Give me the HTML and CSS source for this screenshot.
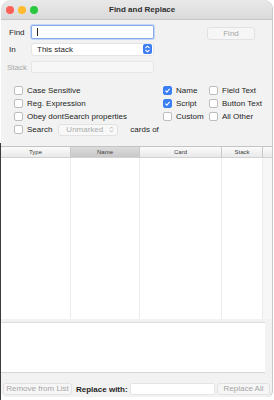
FILE: index.html
```html
<!DOCTYPE HTML>
<html>
	<head>
		<meta charset="utf-8">
		<title>Find and Replace</title>
		<link rel="stylesheet" href="styles.css">
	</head>
	<body>
		<div class="window">
			<div class="titlebar">
				<div class="lights">
					<span class="light red"></span>
					<span class="light yellow"></span>
					<span class="light green"></span>
				</div>
				<div class="title">Find and Replace</div>
			</div>

			<div class="top">
				<div class="row row-find">
					<span class="lbl">Find</span>
					<div class="field focus"><span class="caret"></span></div>
					<div class="btn btn-find">Find</div>
				</div>
				<div class="row row-in">
					<span class="lbl">In</span>
					<div class="popup">
						<span>This stack</span>
						<span class="stepper">
							<svg width="7" height="8" viewBox="0 0 7 8"><path d="M1.5 3 3.5 1.2 5.5 3M1.5 5 3.5 6.8 5.5 5" fill="none" stroke="#fff" stroke-width="1.1"/></svg>
						</span>
					</div>
				</div>
				<div class="row row-stack">
					<span class="lbl dim">Stack</span>
					<div class="field disabled"></div>
				</div>
			</div>

			<div class="options">
				<div class="col col1">
					<label class="chk"><span class="box"></span>Case Sensitive</label>
					<label class="chk"><span class="box"></span>Reg. Expression</label>
					<label class="chk"><span class="box"></span>Obey dontSearch properties</label>
					<label class="chk search"><span class="box"></span>Search
						<span class="mini-popup">Unmarked
							<svg width="5" height="7" viewBox="0 0 5 7"><path d="M1 2.6 2.5 1 4 2.6M1 4.4 2.5 6 4 4.4" fill="none" stroke="#aaa" stroke-width="0.8"/></svg>
						</span>
						<span class="cut">cards of</span>
					</label>
				</div>
				<div class="col col2">
					<label class="chk"><span class="box on"></span>Name</label>
					<label class="chk"><span class="box on"></span>Script</label>
					<label class="chk"><span class="box"></span>Custom</label>
				</div>
				<div class="col col3">
					<label class="chk"><span class="box"></span>Field Text</label>
					<label class="chk"><span class="box"></span>Button Text</label>
					<label class="chk"><span class="box"></span>All Other</label>
				</div>
			</div>

			<div class="table">
				<div class="thead">
					<div class="th c-type">Type</div>
					<div class="th c-name sorted">Name</div>
					<div class="th c-card">Card</div>
					<div class="th c-stack">Stack</div>
					<div class="th c-fill"></div>
				</div>
				<div class="tbody">
					<div class="td c-type"></div>
					<div class="td c-name"></div>
					<div class="td c-card"></div>
					<div class="td c-stack"></div>
					<div class="td c-fill"></div>
				</div>
			</div>

			<div class="notes"></div>

			<div class="bottombar">
				<div class="btn btn-remove">Remove from List</div>
				<span class="lbl-bold">Replace with:</span>
				<div class="field replace"></div>
				<div class="btn btn-replace">Replace All</div>
			</div>
		</div>
	</body>
</html>
```

FILE: styles.css
```css
html, body{
	margin: 0;
	padding: 0;
}
body{
	width: 274px;
	height: 400px;
	overflow: hidden;
	font-family: "Liberation Sans", Arial, sans-serif;
	font-size: 8px;
	color: #1e1e1e;
	background:
		linear-gradient(#fff 143px, transparent 143px),
		linear-gradient(90deg, #3c3c3c 1px, #fff 1px);
}
.window{
	margin-left: 1px;
	width: 271px;
	height: 397px;
	background: #f2f2f2;
	border-radius: 9px 9px 6px 6px;
	overflow: hidden;
	box-shadow: 1px 0 0 #c9c9c9;
	display: flex;
	flex-direction: column;
}

/* title bar */
.titlebar{
	height: 19px;
	flex: none;
	display: flex;
	align-items: center;
	background: linear-gradient(#e9e9e9, #dadada);
	border-bottom: 1px solid #c6c6c6;
}
.lights{
	display: flex;
	gap: 4px;
	padding-left: 5px;
	width: 60px;
}
.light{
	width: 8px;
	height: 8px;
	border-radius: 50%;
}
.red{ background: #fe5f57; }
.yellow{ background: #febc2e; }
.green{ background: #28c840; }
.title{
	font-weight: bold;
	font-size: 8px;
	color: #2e2e2e;
	margin-left: 43px;
}

/* find / in / stack rows */
.top{
	padding: 5px 0 0 8px;
}
.row{
	display: flex;
	align-items: center;
}
.lbl{
	width: 22px;
	font-size: 8px;
}
.dim{
	color: #a8a8a8;
	margin-left: -2px;
	width: 24px;
}
.field{
	width: 121px;
	height: 12px;
	background: #fff;
	border: 1px solid #e0e0e0;
	border-radius: 2px;
}
.focus{
	height: 12px;
	border-color: #86acec;
	box-shadow: 0 0 0 1px #c2d5f5;
	display: flex;
	align-items: center;
}
.caret{
	width: 1px;
	height: 8px;
	background: #222;
	margin-left: 5px;
}
.row-find{
	height: 14px;
}
.btn{
	background: #f6f6f6;
	border: 1px solid #e2e2e2;
	border-radius: 3px;
	color: #a6a6a6;
	text-align: center;
	font-size: 8px;
	line-height: 10px;
	white-space: nowrap;
}
.btn-find{
	width: 46px;
	margin-left: 53px;
	margin-top: 3px;
	height: 11px;
	line-height: 11px;
}
.row-in{
	margin-top: 4px;
	height: 12px;
}
.popup{
	height: 11px;
	background: #fff;
	border: 1px solid #e4e4e4;
	border-radius: 3px;
	display: flex;
	align-items: center;
	justify-content: space-between;
	padding-left: 5px;
	width: 116px;
}
.stepper{
	width: 9px;
	height: 10px;
	background: #3c7cf4;
	border-radius: 2px;
	display: flex;
	align-items: center;
	justify-content: center;
	margin-right: 1px;
}
.row-stack{
	margin-top: 6px;
	height: 12px;
}
.row-stack .field{
	height: 10px;
	border-color: #e6e6e6;
	background: #f7f7f7;
}

/* option checkboxes */
.options{
	display: flex;
	padding: 11px 0 0 13px;
	height: 52px;
}
.col{
	display: flex;
	flex-direction: column;
}
.col1{ width: 149px; }
.col2{ width: 46px; }
.chk{
	display: flex;
	align-items: center;
	height: 13px;
	white-space: nowrap;
	font-size: 8px;
}
.box{
	width: 7px;
	height: 7px;
	border: 1px solid #bdbdbd;
	border-radius: 2px;
	background: #fff;
	margin-right: 4px;
	flex: none;
}
.box.on{
	border-color: #3b7ff5;
	background: #3b7ff5 url("data:image/svg+xml,%3Csvg xmlns='http://www.w3.org/2000/svg' viewBox='0 0 8 8'%3E%3Cpath d='M1.6 4.2 3.3 5.9 6.5 2' fill='none' stroke='white' stroke-width='1.3'/%3E%3C/svg%3E") center/7px 7px no-repeat;
}
.search{
	overflow: hidden;
	width: 146px;
}
.mini-popup{
	margin-left: 6px;
	width: 48px;
	height: 10px;
	border: 1px solid #e2e2e2;
	border-radius: 3px;
	background: #f8f8f8;
	color: #ababab;
	display: flex;
	align-items: center;
	justify-content: space-between;
	padding: 0 3px 0 7px;
	flex: none;
}
.cut{
	margin-left: 12px;
}

/* result table */
.table{
	margin-top: 10px;
	border-top: 1px solid #c4c4c4;
	flex: none;
}
.thead, .tbody{
	display: flex;
}
.thead{
	height: 10px;
	background: linear-gradient(#fbfbfb, #e9e9e9);
	border-bottom: 1px solid #d2d2d2;
}
.th{
	font-size: 6px;
	color: #3a3a3a;
	text-align: center;
	line-height: 10px;
	border-right: 1px solid #c9c9c9;
	box-sizing: border-box;
}
.th.sorted{
	background: linear-gradient(#dcdcdc, #c8c8c8);
}
.th.c-fill{
	border-right: none;
}
.c-type{ width: 70px; }
.c-name{ width: 69px; }
.c-card{ width: 82px; }
.c-stack{ width: 41px; }
.c-fill{ flex: 1; }
.tbody{
	height: 161px;
	background: #fff;
}
.td{
	border-right: 1px solid #ececec;
	box-sizing: border-box;
}
.td.c-fill{
	border-right: none;
	background: #f7f7f7;
}

.notes{
	height: 49px;
	margin-top: 3px;
	background: #fff;
	border-top: 1px solid #dcdcdc;
	border-bottom: 1px solid #d6d6d6;
	margin-right: 7px;
}

/* bottom bar */
.bottombar{
	display: flex;
	align-items: center;
	padding: 10px 0 0 2px;
}
.btn-remove{
	width: 67px;
	height: 10px;
}
.lbl-bold{
	font-weight: bold;
	margin-left: 4px;
	margin-right: 2px;
	white-space: nowrap;
	color: #1f1f1f;
}
.field.replace{
	flex: 1;
	width: auto;
	height: 10px;
	border-color: #e4e4e4;
}
.btn-replace{
	width: 51px;
	height: 10px;
	margin-left: 2px;
	margin-right: 2px;
}
```
